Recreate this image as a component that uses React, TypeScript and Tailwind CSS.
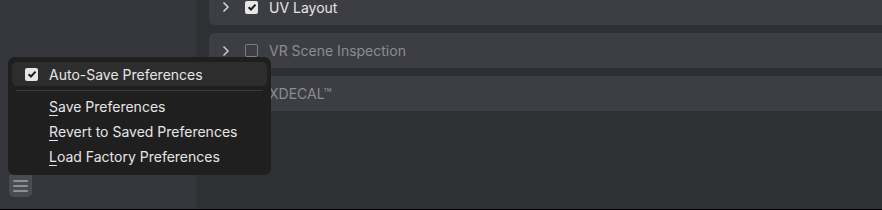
import React from 'react'

const font = { fontFamily: 'Inter, "Noto Sans", sans-serif' }

const Check = ({ on, dim }: { on: boolean; dim?: boolean }) =>
    on ? (
        <div className={`w-[13px] h-[13px] rounded-[2px] flex items-center justify-center ${dim ? 'bg-[#6a6a6a]' : 'bg-[#e6e6e6]'}`}>
            <svg width="10" height="10" viewBox="0 0 10 10">
                <path d="M1.6 5.2 L4 7.5 L8.5 2.6" fill="none" stroke="#1e1e1e" strokeWidth="2" />
            </svg>
        </div>
    ) : (
        <div className={`w-[13px] h-[13px] rounded-[2px] border-[1.5px] ${dim ? 'border-[#4a4b50]' : 'border-[#7d7e83]'}`}></div>
    )

const Chevron = ({ color }: { color: string }) => (
    <svg width="8" height="12" viewBox="0 0 8 12">
        <path d="M1.5 1.5 L6 6 L1.5 10.5" fill="none" stroke={color} strokeWidth="1.5" />
    </svg>
)

const rows = [
    { name: 'UV Layout', on: true, text: 'text-[#e6e6e6]', chev: '#d8d8d8' },
    { name: 'VR Scene Inspection', on: false, text: 'text-[#8c8d91]', chev: '#c8c8c8' },
    { name: 'XDECAL™', on: false, text: 'text-[#8c8d91]', chev: '#8a8b90' },
]

const MenuItem = ({ first, rest }: { first: string; rest: string }) => (
    <div className="h-[25px] flex items-center pl-[37px] text-[14px] text-[#e6e6e6]">
        <span className="underline underline-offset-[3px]">{first}</span>
        <span>{rest}</span>
    </div>
)

const App: React.FC = () => {
    return (
        <div className="relative w-[882px] h-[210px] flex overflow-hidden border-b border-black bg-[#2f3034]" style={font}>
            {/* sidebar */}
            <div className="w-[197px] bg-[#35363b] flex flex-col justify-end pl-[9px] pb-[12px]">
                <div className="w-[23px] h-[22px] bg-[#4b4c51] rounded-b-[5px] flex flex-col items-center justify-center gap-[3px]">
                    <div className="w-[15px] h-[2px] bg-[#8e8f94] rounded"></div>
                    <div className="w-[15px] h-[2px] bg-[#8e8f94] rounded"></div>
                    <div className="w-[15px] h-[2px] bg-[#8e8f94] rounded"></div>
                </div>
            </div>

            {/* add-ons list */}
            <div className="flex-1 pl-3 flex flex-col gap-2 mt-[-11px]">
                {rows.map((r, i) => (
                    <div key={r.name} className={`${i === 0 ? 'h-[36px]' : 'h-[35px]'} bg-[#3d3e43] rounded-l-[6px] flex items-center pl-[13px]`}>
                        <Chevron color={r.chev} />
                        <div className="ml-[15px]"><Check on={r.on} /></div>
                        <span className={`ml-[11px] text-[14px] ${r.text}`}>{r.name}</span>
                    </div>
                ))}
            </div>

            {/* popup menu */}
            <div className="absolute left-[8px] top-[57px] w-[263px] h-[118px] bg-[#1f1f1f] rounded-[7px] px-[4px] pt-[5px]">
                <div className="h-[24px] bg-[#2d2d2d] rounded-[5px] flex items-center pl-[13px] text-[14px] text-[#e6e6e6]">
                    <Check on={true} />
                    <span className="ml-[11px]">Auto-Save Preferences</span>
                </div>
                <div className="mx-[4px] mt-[4px] mb-[3px] h-px bg-[#3b3b3b]"></div>
                <MenuItem first="S" rest="ave Preferences" />
                <MenuItem first="R" rest="evert to Saved Preferences" />
                <MenuItem first="L" rest="oad Factory Preferences" />
            </div>
        </div>
    )
}

export default App
